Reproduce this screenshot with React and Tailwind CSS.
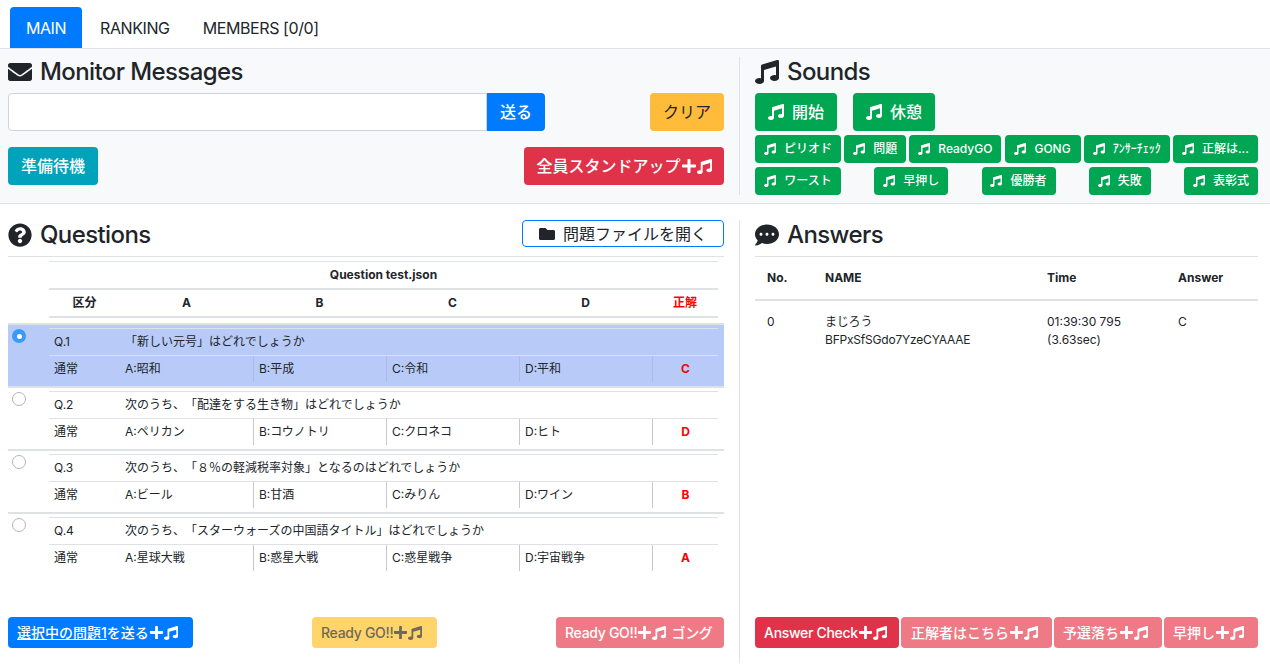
import React from "react";
import { FaEnvelope, FaMusic, FaQuestionCircle, FaFolder, FaCommentDots, FaPlus } from "react-icons/fa";

const smallRow1 = [
  ["ピリオド", "w-[86px]"],
  ["問題", "w-[62px]"],
  ["ReadyGO", "w-[92px]"],
  ["GONG", "w-[76px]"],
  ["ｱﾝｻｰﾁｪｯｸ", "w-[86px]"],
  ["正解は...", "w-[85px]"],
];

const smallRow2 = [
  ["ワースト", "w-[86px]"],
  ["早押し", "w-[74px]"],
  ["優勝者", "w-[74px]"],
  ["失敗", "w-[62px]"],
  ["表彰式", "w-[74px]"],
];

const questions = [
  { no: "Q.1", text: "「新しい元号」はどれでしょうか", a: "A:昭和", b: "B:平成", c: "C:令和", d: "D:平和", ans: "C", selected: true },
  { no: "Q.2", text: "次のうち、「配達をする生き物」はどれでしょうか", a: "A:ペリカン", b: "B:コウノトリ", c: "C:クロネコ", d: "D:ヒト", ans: "D" },
  { no: "Q.3", text: "次のうち、「８％の軽減税率対象」となるのはどれでしょうか", a: "A:ビール", b: "B:甘酒", c: "C:みりん", d: "D:ワイン", ans: "B" },
  { no: "Q.4", text: "次のうち、「スターウォーズの中国語タイトル」はどれでしょうか", a: "A:星球大戦", b: "B:惑星大戦", c: "C:惑星戦争", d: "D:宇宙戦争", ans: "A" },
];

function PlusMusic({ big }) {
  return (
    <span className="inline-flex items-center">
      <FaPlus className={big ? "text-[16px]" : "text-[15px]"} />
      <FaMusic className={big ? "text-[15px]" : "text-[14px]"} />
    </span>
  );
}

function Heading({ icon, children }) {
  return (
    <h2 className="flex items-center gap-2 h-9 pb-[6px] text-2xl font-medium text-[#212529] tracking-[-0.6px]">
      {icon}
      {children}
    </h2>
  );
}

function SoundBtn({ label, width }) {
  return (
    <button className={`${width} h-7 bg-[#00a651] text-white text-xs font-medium rounded flex items-center justify-center gap-2`}>
      <FaMusic className="text-[12px]" />
      <span className="whitespace-nowrap">{label}</span>
    </button>
  );
}

function QuestionRow({ q }) {
  const cellLine = q.selected ? "border-[#a9bbe6]" : "border-[#c9c9c9]";
  return (
    <div className={`flex h-[63px] border-t-2 border-[#dee2e6] ${q.selected ? "bg-[#b8cbf8]" : ""}`}>
      <div className="w-[41px] pl-1 pt-[4px]">
        {q.selected ? (
          <span className="flex w-[14px] h-[14px] rounded-full bg-[#3b99fc] items-center justify-center">
            <span className="w-[5px] h-[5px] rounded-full bg-white" />
          </span>
        ) : (
          <span className="block w-[14px] h-[14px] rounded-full bg-white border border-[#b5b5b5]" />
        )}
      </div>
      <div className="w-[669px] mt-[3px]">
        <div className="grid grid-cols-[71px_133px_133px_133px_133px_66px] h-[27px] items-center border-t border-[#dee2e6]">
          <span className="pl-[5px]">{q.no}</span>
          <span className="col-span-5 pl-[5px] [text-spacing-trim:space-all]">{q.text}</span>
        </div>
        <div className="grid grid-cols-[71px_133px_133px_133px_133px_66px] h-[27px] border-t border-[#dee2e6] leading-[26px]">
          <span className="pl-[5px]">通常</span>
          <span className="pl-[5px]">{q.a}</span>
          <span className={`pl-[5px] border-l ${cellLine}`}>{q.b}</span>
          <span className={`pl-[5px] border-l ${cellLine}`}>{q.c}</span>
          <span className={`pl-[5px] border-l ${cellLine}`}>{q.d}</span>
          <span className={`text-center font-bold text-[#ff0000] border-l ${cellLine}`}>{q.ans}</span>
        </div>
      </div>
    </div>
  );
}

export default function App() {
  return (
    <div className="h-[667px] overflow-hidden bg-white text-[#212529] font-['Inter','Noto_Sans_CJK_JP',sans-serif]">
      {/* Tabs */}
      <div className="flex h-[49px] pt-[7px] pl-[10px] border-b border-[#dee2e6] text-base tracking-[-0.4px]">
        <div className="w-[72px] h-[41px] flex items-center justify-center rounded-t bg-[#007bff] text-white">MAIN</div>
        <div className="h-[41px] pl-[18px] pr-[17px] flex items-center">RANKING</div>
        <div className="h-[41px] px-4 flex items-center">MEMBERS [0/0]</div>
      </div>

      {/* Monitor / Sounds */}
      <div className="flex h-[155px] pt-2 bg-[#f8f9fa] border-b border-[#dee2e6]">
        <div className="w-[740px] h-[138px] pl-2 pr-[15px] border-r border-[#dee2e6]">
          <Heading icon={<FaEnvelope className="text-[24px]" />}>Monitor Messages</Heading>
          <div className="flex justify-between">
            <div className="flex">
              <input className="w-[479px] h-[38px] bg-white border border-[#ced4da] rounded-l" />
              <button className="w-[58px] h-[38px] bg-[#007bff] text-white font-medium rounded-r">送る</button>
            </div>
            <button className="w-[74px] h-[38px] bg-[#febc3a] rounded">クリア</button>
          </div>
          <div className="flex justify-between mt-4">
            <button className="w-[90px] h-[38px] bg-[#00a3b9] text-white font-medium rounded">準備待機</button>
            <button className="w-[200px] h-[38px] bg-[#e0334a] text-white font-medium rounded flex items-center justify-center">
              全員スタンドアップ
              <PlusMusic big />
            </button>
          </div>
        </div>
        <div className="w-[530px] pl-[15px] pr-3">
          <Heading icon={<FaMusic className="text-[24px]" />}>Sounds</Heading>
          <div className="flex gap-4">
            <button className="w-[82px] h-[38px] bg-[#00a651] text-white font-medium rounded flex items-center justify-center gap-2">
              <FaMusic className="text-[16px]" />
              開始
            </button>
            <button className="w-[82px] h-[38px] bg-[#00a651] text-white font-medium rounded flex items-center justify-center gap-2">
              <FaMusic className="text-[16px]" />
              休憩
            </button>
          </div>
          <div className="flex justify-between mt-1">
            {smallRow1.map(([label, width]) => (
              <SoundBtn key={label} label={label} width={width} />
            ))}
          </div>
          <div className="flex justify-between mt-1">
            {smallRow2.map(([label, width]) => (
              <SoundBtn key={label} label={label} width={width} />
            ))}
          </div>
        </div>
      </div>

      {/* Questions / Answers */}
      <div className="flex pt-4">
        <div className="w-[740px] h-[443px] pl-2 pr-[15px] border-r border-[#dee2e6] flex flex-col text-xs">
          <div className="flex justify-between items-start h-[37px] border-b border-[#dee2e6]">
            <Heading icon={<FaQuestionCircle className="text-[24px]" />}>Questions</Heading>
            <button className="w-[202px] h-[27px] bg-white border border-[#007bff] rounded text-base flex items-center justify-center gap-2">
              <FaFolder className="text-[16px]" />
              問題ファイルを開く
            </button>
          </div>
          <div className="ml-[41px] w-[669px] mt-1 border-t border-[#dee2e6] font-bold">
            <div className="h-[26px] flex items-center justify-center">Question test.json</div>
            <div className="grid grid-cols-[71px_133px_133px_133px_133px_66px] h-[30px] items-center text-center border-y-2 border-[#dee2e6]">
              <span>区分</span>
              <span>A</span>
              <span>B</span>
              <span>C</span>
              <span>D</span>
              <span className="text-[#ff0000]">正解</span>
            </div>
          </div>
          <div className="mt-[5px]">
            {questions.map((q) => (
              <QuestionRow key={q.no} q={q} />
            ))}
          </div>
          <div className="flex justify-between mt-[42px] text-sm font-medium">
            <button className="w-[185px] h-[31px] bg-[#007bff] text-white rounded flex items-center pl-[9px]">
              <span className="underline">選択中の問題1</span>を送る
              <PlusMusic />
            </button>
            <button className="w-[125px] h-[31px] bg-[#ffd56b] text-[#6f6a58] rounded flex items-center pl-[9px] tracking-[-0.3px]">
              Ready GO!!
              <PlusMusic />
            </button>
            <button className="w-[168px] h-[31px] bg-[#ee7a86] text-white rounded flex items-center pl-[9px] tracking-[-0.3px]">
              Ready GO!!
              <PlusMusic />
              <span className="ml-[5px]">ゴング</span>
            </button>
          </div>
        </div>

        <div className="w-[530px] h-[443px] pl-[15px] pr-3 flex flex-col text-xs">
          <div className="h-[37px] border-b border-[#dee2e6]">
            <Heading icon={<FaCommentDots className="text-[24px]" />}>Answers</Heading>
          </div>
          <div className="grid grid-cols-[58px_222px_131px_92px] h-[44px] items-center pl-3 font-bold border-b-2 border-[#dee2e6]">
            <span>No.</span>
            <span>NAME</span>
            <span>Time</span>
            <span>Answer</span>
          </div>
          <div className="grid grid-cols-[58px_222px_131px_92px] pl-3 pt-3 leading-[18px]">
            <span>0</span>
            <span className="tracking-[-0.2px]">
              まじろう
              <br />
              BFPxSfSGdo7YzeCYAAAE
            </span>
            <span>
              01:39:30 795
              <br />
              (3.63sec)
            </span>
            <span>C</span>
          </div>
          <div className="flex justify-between mt-auto mb-[15px] text-sm font-medium text-white">
            <button className="w-[144px] h-[31px] bg-[#e0334a] rounded flex items-center pl-[9px] tracking-[-0.3px]">
              Answer Check
              <PlusMusic />
            </button>
            <button className="w-[151px] h-[31px] bg-[#ee7a86] rounded flex items-center pl-[10px]">
              正解者はこちら
              <PlusMusic />
            </button>
            <button className="w-[108px] h-[31px] bg-[#ee7a86] rounded flex items-center pl-[9px]">
              予選落ち
              <PlusMusic />
            </button>
            <button className="w-[94px] h-[31px] bg-[#ee7a86] rounded flex items-center pl-[9px]">
              早押し
              <PlusMusic />
            </button>
          </div>
        </div>
      </div>
    </div>
  );
}
